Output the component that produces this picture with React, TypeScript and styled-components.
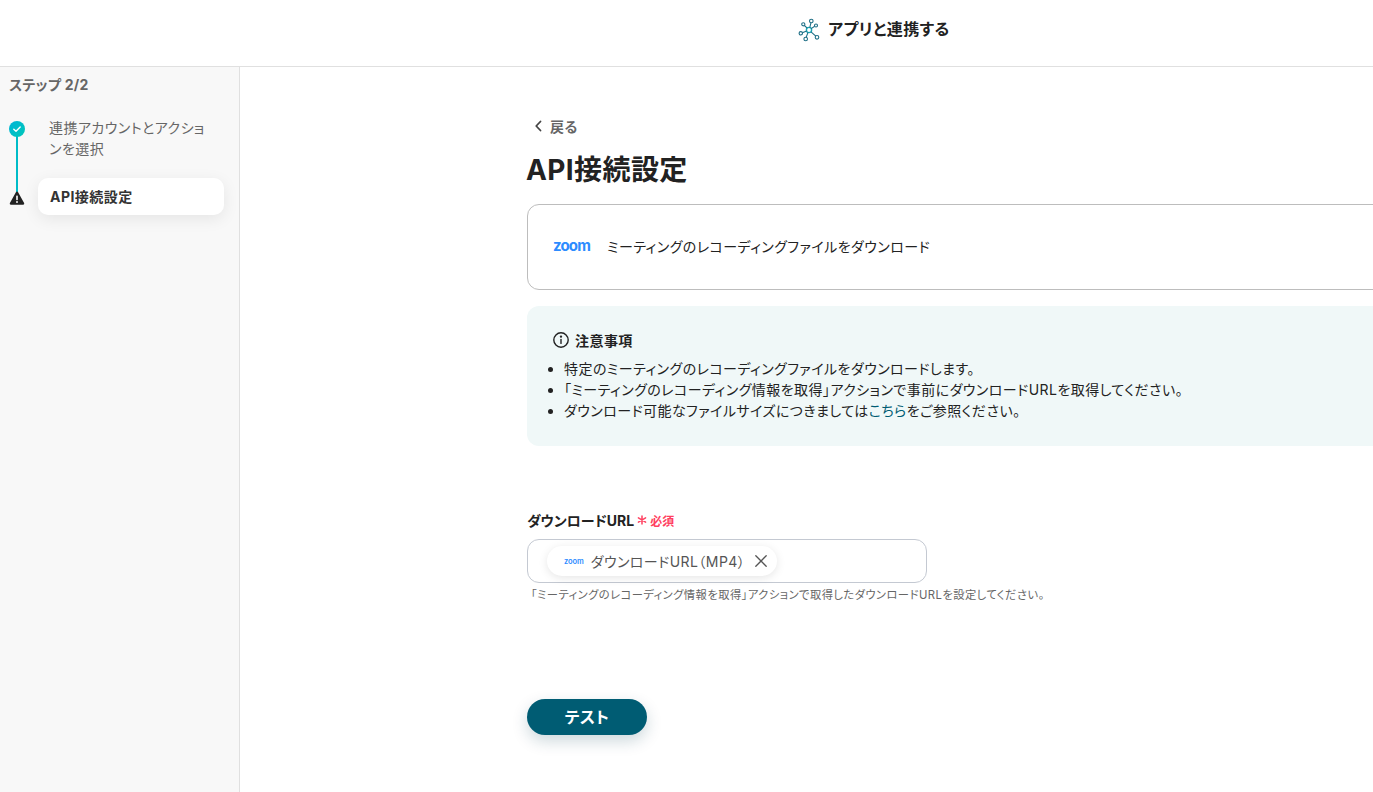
import styled, { createGlobalStyle } from "styled-components";

const GlobalStyle = createGlobalStyle`
  html, body {
    margin: 0;
    padding: 0;
    height: 100%;
    overflow: hidden;
    background: #fff;
  }
  body {
    font-family: Inter, "Noto Sans CJK JP", sans-serif;
    font-feature-settings: "palt";
    letter-spacing: 0.028em;
    color: #222;
  }
`;

const Page = styled.div`
  width: 1373px;
  height: 792px;
  display: flex;
  flex-direction: column;
  overflow: hidden;
`;

const Header = styled.header`
  height: 67px;
  flex-shrink: 0;
  box-sizing: border-box;
  border-bottom: 1px solid #e0e0e0;
  display: flex;
  align-items: center;
  gap: 8px;
  padding: 0 0 6px 798px;
`;

const HeaderTitle = styled.h1`
  margin: 0 0 2px;
  font-size: 16px;
  font-weight: 700;
  line-height: 24px;
  letter-spacing: 0.03em;
  color: #222;
`;

const Body = styled.div`
  flex: 1;
  display: flex;
  min-height: 0;
`;

const Sidebar = styled.aside`
  flex-shrink: 0;
  width: 215px;
  box-sizing: content-box;
  background: #f8f8f8;
  border-right: 1px solid #e0e0e0;
  padding: 8px 15px 0 9px;
`;

const StepCount = styled.div`
  font-size: 14px;
  font-weight: 700;
  line-height: 20px;
  letter-spacing: 0.3px;
  color: #666;
  margin-bottom: 22px;
`;

const Steps = styled.div`
  position: relative;
  display: flex;
  flex-direction: column;
  gap: 17px;

  &::before {
    content: "";
    position: absolute;
    left: 7px;
    top: 12px;
    width: 2px;
    height: 63px;
    background: #00bcc8;
  }
`;

const Step = styled.div`
  display: flex;
  align-items: center;
  gap: 21px;
  position: relative;
`;

const StepMarker = styled.span`
  width: 16px;
  height: 16px;
  flex-shrink: 0;
  display: flex;
  position: relative;
  top: 1px;
`;

const StepLabel = styled.div<{ $active?: boolean }>`
  box-sizing: border-box;
  width: ${(p) => (p.$active ? "186px" : "162px")};
  margin-left: ${(p) => (p.$active ? "-8px" : "3px")};
  font-size: 14px;
  line-height: ${(p) => (p.$active ? "21px" : "20.5px")};
  font-weight: ${(p) => (p.$active ? 700 : 400)};
  color: ${(p) => (p.$active ? "#333" : "#666")};
  padding: ${(p) => (p.$active ? "8px 12px" : "0")};
  background: ${(p) => (p.$active ? "#fff" : "transparent")};
  border-radius: ${(p) => (p.$active ? "10px" : "0")};
  box-shadow: ${(p) => (p.$active ? "0 4px 16px rgba(0, 0, 0, 0.08)" : "none")};
`;

const FirstStep = styled(Step)`
  align-items: flex-start;
  height: 43px;
  margin-top: 1px;
  ${StepMarker} {
    top: 0;
    margin-top: 3px;
  }
`;

const Main = styled.main`
  flex: 1;
  min-width: 0;
  padding: 49px 0 0 287px;
`;

const BackLink = styled.a`
  display: flex;
  align-items: center;
  gap: 7px;
  height: 20px;
  font-size: 14px;
  font-weight: 700;
  color: #666;
  padding-left: 7px;
`;

const PageTitle = styled.h2`
  margin: 14px 0 14px -1px;
  font-size: 28px;
  line-height: 40px;
  font-weight: 700;
  letter-spacing: 0.4px;
  color: #222;
`;

const ActionCard = styled.div`
  width: 900px;
  height: 86px;
  box-sizing: border-box;
  border: 1px solid #bdbdbd;
  border-radius: 12px;
  display: flex;
  align-items: center;
  gap: 17px;
  padding: 0 0 2px 25px;
  font-size: 14px;
  color: #222;
`;

const ZoomMark = styled.span<{ $small?: boolean }>`
  font-family: Inter, sans-serif;
  font-weight: ${(p) => (p.$small ? 600 : 700)};
  color: #2d8cff;
  font-size: ${(p) => (p.$small ? "7.5px" : "15px")};
  line-height: 1;
  letter-spacing: ${(p) => (p.$small ? "-0.1px" : "-0.85px")};
  position: relative;
  top: ${(p) => (p.$small ? "1px" : "-1px")};
`;

const Notice = styled.section`
  width: 900px;
  height: 140px;
  box-sizing: border-box;
  margin-top: 16px;
  padding: 24px 26px 0 25px;
  background: #f0f8f8;
  border-radius: 12px;
`;

const NoticeTitle = styled.div`
  display: flex;
  align-items: center;
  gap: 5px;
  height: 20px;
  font-size: 14px;
  font-weight: 700;
  color: #222;
`;

const NoticeList = styled.ul`
  margin: 8px 0 0;
  padding: 0 0 0 12px;
  font-size: 14px;
  line-height: 21px;
  color: #222;
`;

const InlineLink = styled.a`
  color: #005c73;
`;

const Field = styled.div`
  margin-top: 64px;
`;

const FieldLabel = styled.label`
  display: flex;
  align-items: center;
  gap: 3px;
  height: 20px;
  font-size: 14px;
  font-weight: 700;
  letter-spacing: 0;
  color: #222;
`;

const Required = styled.span`
  display: flex;
  align-items: center;
  gap: 3px;
  font-size: 12px;
  font-weight: 700;
  letter-spacing: 0;
  color: #ff4060;
`;

const TokenInput = styled.div`
  width: 400px;
  height: 44px;
  box-sizing: border-box;
  margin-top: 9px;
  border: 1px solid #c4c9d2;
  border-radius: 12px;
  display: flex;
  align-items: center;
  padding-left: 19px;
`;

const Token = styled.div`
  height: 30px;
  box-sizing: border-box;
  display: flex;
  align-items: center;
  gap: 7px;
  padding: 0 9px 0 17px;
  background: #fff;
  border-radius: 15px;
  box-shadow: 0 2px 10px rgba(0, 0, 0, 0.1);
  font-size: 14px;
  color: #555;
  white-space: nowrap;
`;

const TokenClose = styled.span`
  display: flex;
  margin-left: 2px;
`;

const Hint = styled.p`
  margin: 4px 0 0 4px;
  font-size: 11.3px;
  line-height: 16px;
  color: #666;
`;

const TestButton = styled.button`
  display: block;
  margin-top: 96px;
  width: 120px;
  height: 36px;
  padding: 0 0 2px;
  border: 0;
  border-radius: 18px;
  background: #005c73;
  color: #fff;
  font-family: inherit;
  font-feature-settings: inherit;
  letter-spacing: inherit;
  font-size: 16px;
  font-weight: 700;
  box-shadow: 0 6px 16px rgba(0, 60, 80, 0.2);
`;

const NetworkIcon = () => (
  <svg width="22" height="24" viewBox="0 0 22 24" fill="none" stroke="#1f6f86" strokeWidth="1.1">
    <circle cx="11" cy="12" r="2.6" stroke="#19a5b5" strokeWidth="1.4" />
    <circle cx="13.3" cy="3" r="1.8" />
    <circle cx="18" cy="7.5" r="1.5" />
    <circle cx="5.3" cy="6.3" r="1.6" />
    <circle cx="2.8" cy="15.3" r="1.7" />
    <circle cx="7.7" cy="21" r="1.8" />
    <circle cx="19" cy="19.3" r="1.8" />
    <path d="M11.8 9.6 12.9 4.8M13.2 10.6 16.7 8.3M9.2 10.2 6.4 7.5M8.6 13 4.4 14.8M10 14.4 8.2 19.3M13 13.8 17.8 18.1" />
  </svg>
);

const CheckIcon = () => (
  <svg width="16" height="16" viewBox="0 0 16 16">
    <defs>
      <linearGradient id="stepCheck" x1="0" y1="0" x2="1" y2="1">
        <stop offset="0" stopColor="#00b4d8" />
        <stop offset="1" stopColor="#00c8b8" />
      </linearGradient>
    </defs>
    <circle cx="8" cy="8" r="8" fill="url(#stepCheck)" />
    <path d="M4.8 8.2 7 10.3 11.2 6" fill="none" stroke="#fff" strokeWidth="1.4" strokeLinecap="round" strokeLinejoin="round" />
  </svg>
);

const WarningIcon = () => (
  <svg width="16" height="16" viewBox="0 0 16 16">
    <path d="M8 1.6c.5 0 .9.3 1.1.7l6 10.8c.4.8-.1 1.7-1 1.7H1.9c-.9 0-1.4-.9-1-1.7l6-10.8c.2-.4.6-.7 1.1-.7Z" fill="#222" />
    <rect x="7.2" y="5.4" width="1.6" height="4.8" rx=".6" fill="#fff" />
    <circle cx="8" cy="12" r=".95" fill="#fff" />
  </svg>
);

const ChevronLeft = () => (
  <svg width="9" height="12" viewBox="0 0 9 12" fill="none" stroke="#444" strokeWidth="1.8" strokeLinecap="round" strokeLinejoin="round">
    <path d="M6.5 1.5 2.2 6l4.3 4.5" />
  </svg>
);

const InfoIcon = () => (
  <svg width="18" height="18" viewBox="0 0 18 18" fill="none" stroke="#222" strokeWidth="1.4" strokeLinecap="round">
    <circle cx="9" cy="9" r="7.2" />
    <path d="M9 8.4v4" />
    <circle cx="9" cy="5.6" r=".5" fill="#222" />
  </svg>
);

const CloseIcon = () => (
  <svg width="14" height="14" viewBox="0 0 14 14" fill="none" stroke="#555" strokeWidth="1.3" strokeLinecap="round">
    <path d="M1.8 1.8 12.2 12.2M12.2 1.8 1.8 12.2" />
  </svg>
);

const Asterisk = () => (
  <svg width="10" height="10" viewBox="0 0 10 10" fill="none" stroke="#ff4060" strokeWidth="1.5" strokeLinecap="round">
    <path d="M5 .9v8.2M1.4 2.9l7.2 4.2M8.6 2.9 1.4 7.1" />
  </svg>
);

export default function App() {
  return (
    <Page>
      <GlobalStyle />
      <Header>
        <NetworkIcon />
        <HeaderTitle>アプリと連携する</HeaderTitle>
      </Header>
      <Body>
        <Sidebar>
          <StepCount>ステップ 2/2</StepCount>
          <Steps>
            <FirstStep>
              <StepMarker>
                <CheckIcon />
              </StepMarker>
              <StepLabel>連携アカウントとアクションを選択</StepLabel>
            </FirstStep>
            <Step>
              <StepMarker>
                <WarningIcon />
              </StepMarker>
              <StepLabel $active>API接続設定</StepLabel>
            </Step>
          </Steps>
        </Sidebar>
        <Main>
          <BackLink>
            <ChevronLeft />
            戻る
          </BackLink>
          <PageTitle>API接続設定</PageTitle>
          <ActionCard>
            <ZoomMark>zoom</ZoomMark>
            ミーティングのレコーディングファイルをダウンロード
          </ActionCard>
          <Notice>
            <NoticeTitle>
              <InfoIcon />
              注意事項
            </NoticeTitle>
            <NoticeList>
              <li>特定のミーティングのレコーディングファイルをダウンロードします。</li>
              <li>「ミーティングのレコーディング情報を取得」アクションで事前にダウンロードURLを取得してください。</li>
              <li>
                ダウンロード可能なファイルサイズにつきましては<InlineLink>こちら</InlineLink>をご参照ください。
              </li>
            </NoticeList>
          </Notice>
          <Field>
            <FieldLabel>
              ダウンロードURL
              <Required>
                <Asterisk />
                必須
              </Required>
            </FieldLabel>
            <TokenInput>
              <Token>
                <ZoomMark $small>zoom</ZoomMark>
                ダウンロードURL（MP4）
                <TokenClose>
                  <CloseIcon />
                </TokenClose>
              </Token>
            </TokenInput>
            <Hint>「ミーティングのレコーディング情報を取得」アクションで取得したダウンロードURLを設定してください。</Hint>
          </Field>
          <TestButton>テスト</TestButton>
        </Main>
      </Body>
    </Page>
  );
}
